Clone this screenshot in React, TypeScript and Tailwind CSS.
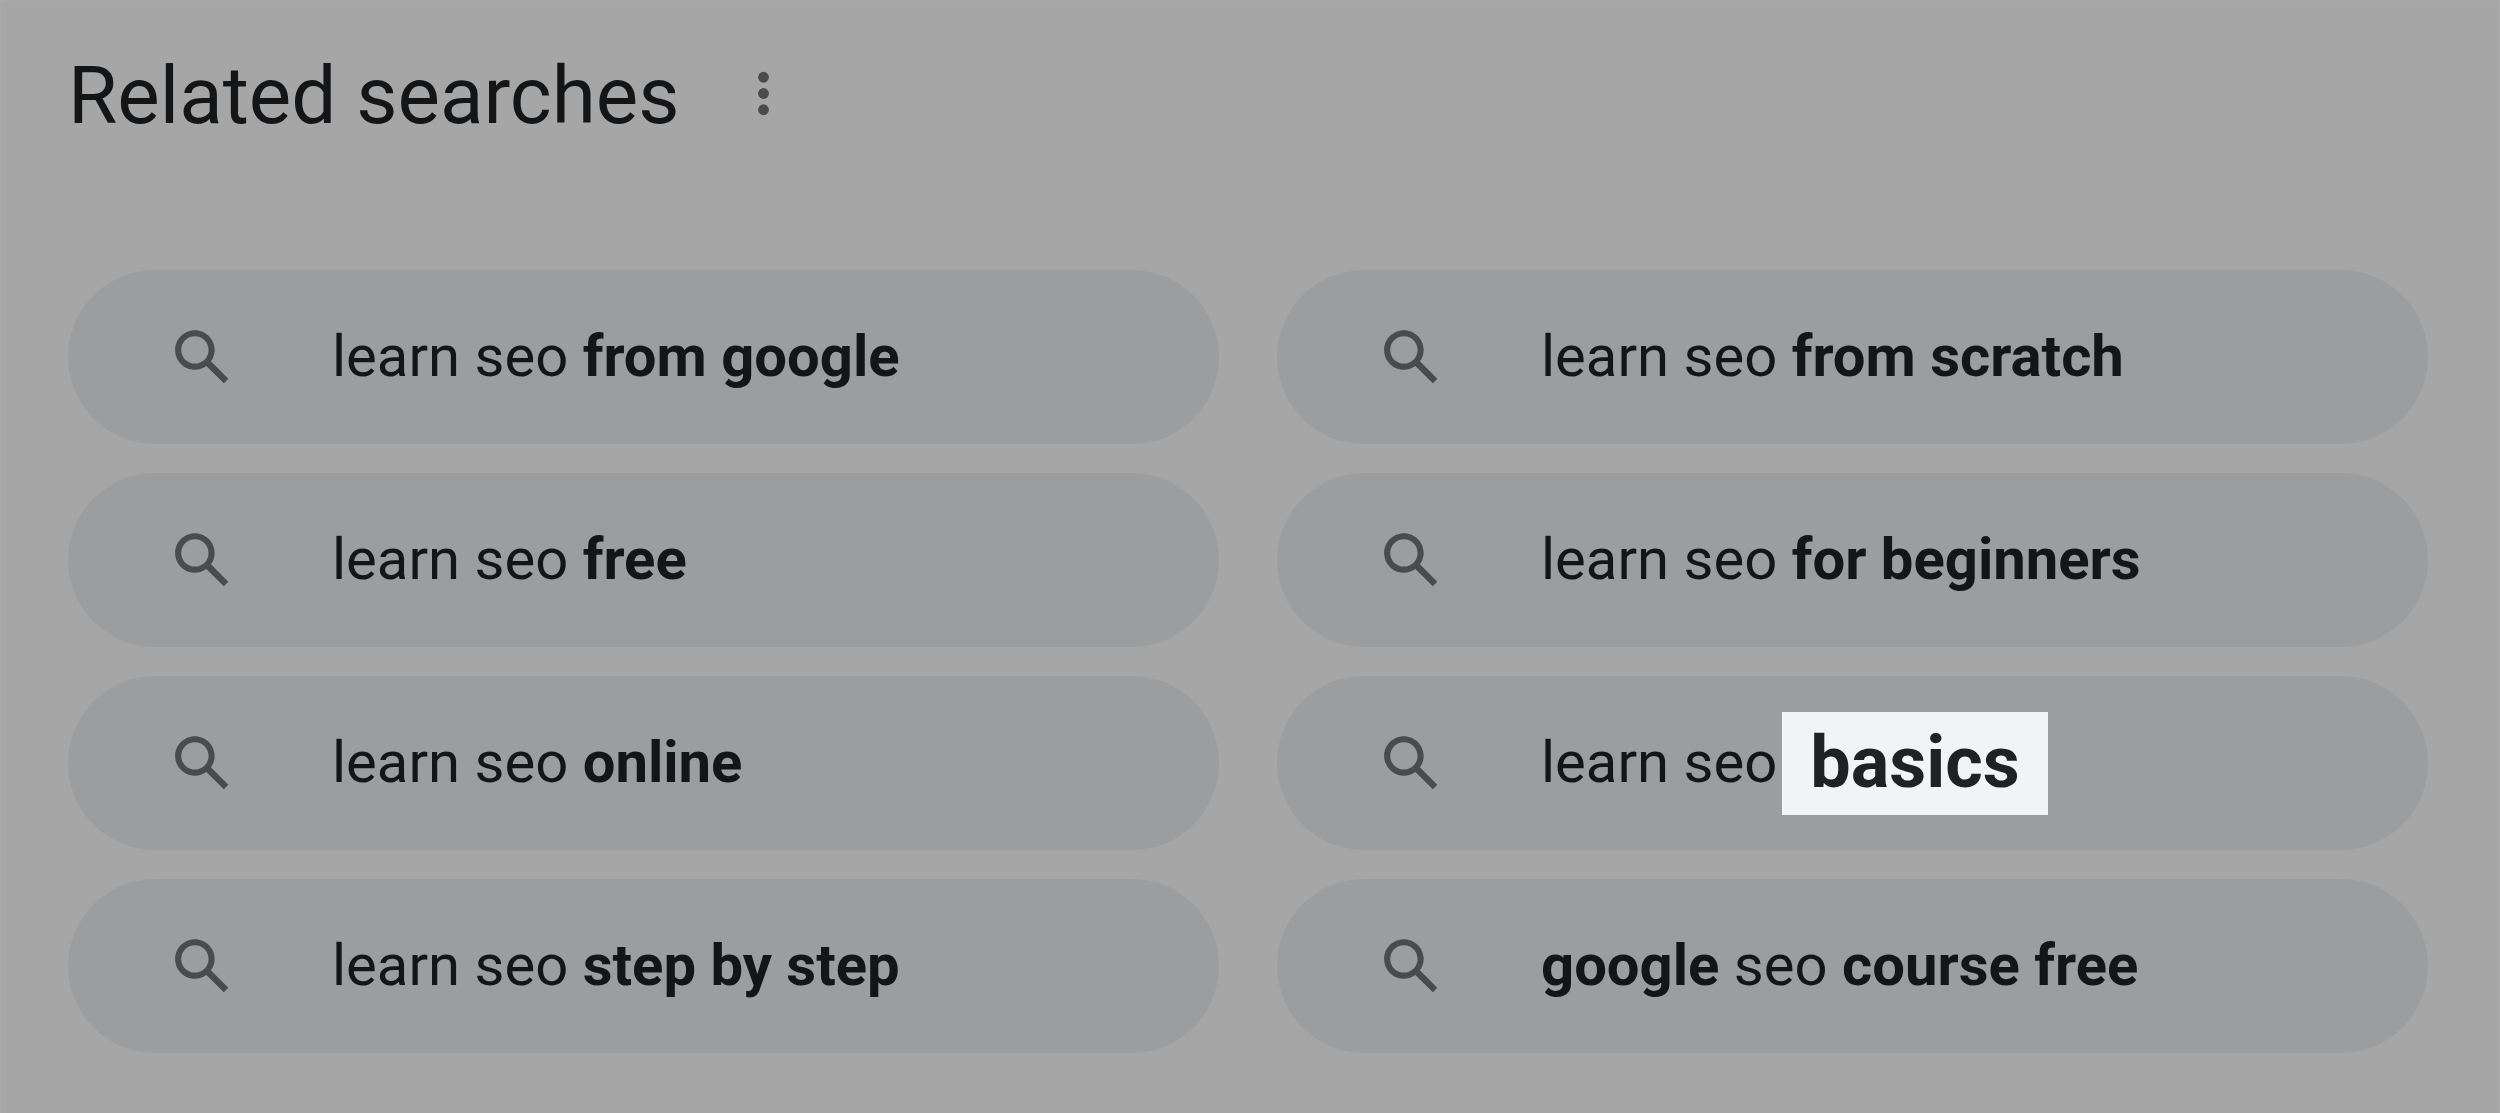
type Part = { text: string; bold?: boolean; highlight?: boolean };

const searches: Part[][] = [
  [{ text: "learn seo " }, { text: "from google", bold: true }],
  [{ text: "learn seo " }, { text: "from scratch", bold: true }],
  [{ text: "learn seo " }, { text: "free", bold: true }],
  [{ text: "learn seo " }, { text: "for beginners", bold: true }],
  [{ text: "learn seo " }, { text: "online", bold: true }],
  [{ text: "learn seo" }, { text: "basics", highlight: true }],
  [{ text: "learn seo " }, { text: "step by step", bold: true }],
  [{ text: "google", bold: true }, { text: " seo " }, { text: "course free", bold: true }],
];

function SearchIcon() {
  return (
    <svg viewBox="0 0 24 24" className="size-[73px] shrink-0 fill-[#4a4b4d]" aria-hidden="true">
      <path d="M20.49 19l-5.73-5.73C15.53 12.2 16 10.91 16 9.5 16 5.91 13.09 3 9.5 3S3 5.91 3 9.5 5.91 16 9.5 16c1.41 0 2.7-.47 3.77-1.24L19 20.49 20.49 19zM5 9.5C5 7.01 7.01 5 9.5 5S14 7.01 14 9.5 11.99 14 9.5 14 5 11.99 5 9.5z" />
    </svg>
  );
}

function SearchPill({ parts }: { parts: Part[] }) {
  return (
    <a
      href="#"
      className="flex h-[174px] min-w-0 items-center gap-[93px] rounded-full bg-[#9c9d9f] pl-[98px] pr-10 text-[58px] leading-[56px] text-[#141517]"
    >
      <SearchIcon />
      <span className="flex items-center whitespace-pre">
        {parts.map((part) =>
          part.highlight ? (
            <strong
              key={part.text}
              className="ml-[5px] flex h-[103px] items-center bg-[#f1f3f5] px-7 text-[72px] font-bold text-[#202124]"
            >
              {part.text}
            </strong>
          ) : (
            <span key={part.text} className={part.bold ? "pb-0.5 font-bold" : "pb-0.5 font-normal"}>
              {part.text}
            </span>
          ),
        )}
      </span>
    </a>
  );
}

export default function App() {
  return (
    <main className="min-h-screen border border-[#a9a9a9] bg-[#a6a6a6] pb-15 pl-[67px] pr-[71px] pt-12 font-[Roboto,sans-serif]">
      <header className="flex items-start gap-[52px]">
        <h2 className="text-[80px] leading-[94px] text-[#141517]">Related searches</h2>
        <button type="button" aria-label="More options" className="mt-3">
          <svg viewBox="0 0 24 24" className="size-[65px] fill-[#4a4b4d]" aria-hidden="true">
            <circle cx="12" cy="6" r="2" />
            <circle cx="12" cy="12" r="2" />
            <circle cx="12" cy="18" r="2" />
          </svg>
        </button>
      </header>
      <nav aria-label="Related searches" className="mt-[127px] grid grid-cols-2 gap-x-[58px] gap-y-[29px]">
        {searches.map((parts, i) => (
          <SearchPill key={i} parts={parts} />
        ))}
      </nav>
    </main>
  );
}
